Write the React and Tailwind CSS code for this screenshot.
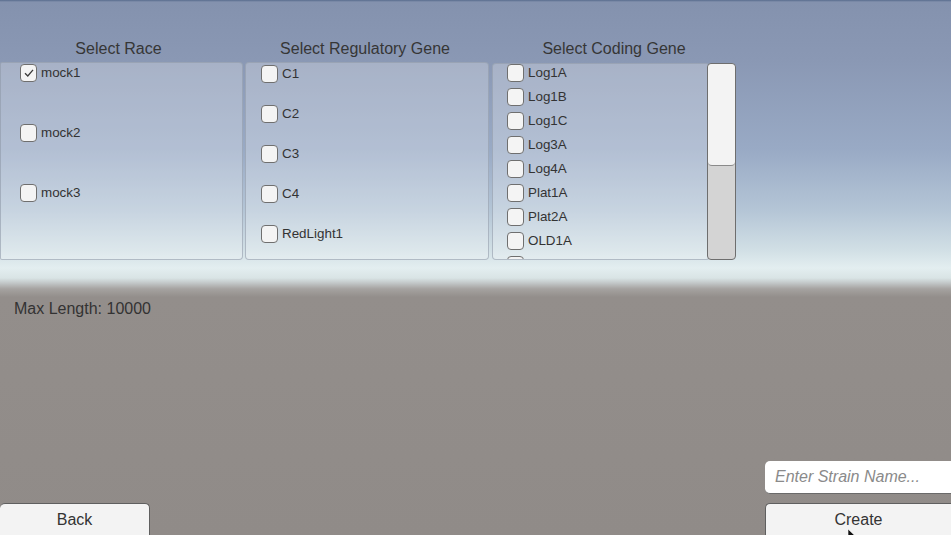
import React from 'react';

const race = ['mock1', 'mock2', 'mock3'];
const regulatory = ['C1', 'C2', 'C3', 'C4', 'RedLight1'];
const coding = ['Log1A', 'Log1B', 'Log1C', 'Log3A', 'Log4A', 'Plat1A', 'Plat2A', 'OLD1A', 'OLD2A'];

const Check = ({ label, checked }) => (
  <div className="flex h-[17px] shrink-0 items-center gap-[4px]">
    <div className="flex h-[18px] w-[17px] items-center justify-center rounded-[4px] border border-[#6f6f6f] bg-[#f4f4f4]">
      {checked && (
        <svg width="12" height="12" viewBox="0 0 12 12" fill="none">
          <path d="M2 6.2 L4.8 9 L10 2.8" stroke="#3a3a3a" strokeWidth="1.3" />
        </svg>
      )}
    </div>
    <span className="text-[13.4px] leading-none text-[#333]">{label}</span>
  </div>
);

const Column = ({ title, width, shift = 0, children }) => (
  <div className="flex flex-col" style={{ width }}>
    <div className="h-[22px] text-center text-[16px] leading-[22px] text-[#363636]" style={{ paddingRight: shift }}>
      {title}
    </div>
    {children}
  </div>
);

const panel = 'h-[198px] overflow-hidden rounded-[4px] border border-[#8f9aa8]/60 bg-white/25';

export default function App() {
  return (
    <div className="relative flex h-[535px] w-[951px] flex-col overflow-hidden bg-[linear-gradient(to_bottom,#586c8d_0px,#8492ae_2px,#8a98b4_60px,#99aac5_150px,#b4c5d6_210px,#d1dfe5_250px,#e3eef0_268px,#d9e4e5_278px,#c2c7c8_283px,#a5a2a0_289px,#938e8b_297px,#908b88_535px)] font-['Liberation_Sans',Arial,sans-serif] text-[#333]">
      <div className="flex pt-[38px]">
        <Column title="Select Race" width={243} shift={6}>
          <div className={`${panel} mt-[2px] rounded-l-[2px]`}>
            <div className="flex flex-col gap-[43px] pl-[19px] pt-[1px]">
              {race.map((r, i) => (
                <Check key={r} label={r} checked={i === 0} />
              ))}
            </div>
          </div>
        </Column>
        <div className="w-[2px]" />
        <Column title="Select Regulatory Gene" width={244} shift={4}>
          <div className={`${panel} mt-[2px]`}>
            <div className="flex flex-col gap-[23px] pl-[15px] pt-[2px]">
              {regulatory.map((r) => (
                <Check key={r} label={r} />
              ))}
            </div>
          </div>
        </Column>
        <div className="w-[3px]" />
        <Column title="Select Coding Gene" width={244} shift={-2}>
          <div className="relative mt-[3px] h-[197px]">
            <div className="h-full w-[218px] overflow-hidden rounded-[4px] border border-[#8f9aa8]/60 bg-white/25">
              <div className="flex flex-col gap-[7px] pl-[14px] pt-[0px]">
                {coding.map((r) => (
                  <Check key={r} label={r} />
                ))}
              </div>
            </div>
            <div className="absolute right-0 top-0 h-full w-[29px] overflow-hidden rounded-[4px] border border-[#6e6e6e] bg-[#d4d4d4]">
              <div className="h-[102px] rounded-[4px] border-b border-[#8a8a8a] bg-[#f3f3f3]" />
            </div>
          </div>
        </Column>
      </div>

      <div className="mt-[40px] pl-[14px] text-[16px] leading-[18px] text-[#333]">Max Length: 10000</div>

      <div className="mt-auto flex items-end justify-between">
        <button className="h-[32px] w-[150px] rounded-t-[5px] border-t border-r border-[#5f5f5f] bg-[#f3f3f3] text-[16px] leading-[32px] text-[#333]">
          Back
        </button>
        <div className="flex w-[186px] flex-col gap-[9px]">
          <div className="flex h-[33px] items-center rounded-l-[5px] border-b border-[#6a6a6a] bg-white pl-[10px] text-[16px] italic text-[#8a8a8a]">
            Enter Strain Name...
          </div>
          <button className="relative h-[32px] rounded-tl-[5px] border-t border-l border-[#5f5f5f] bg-[#f3f3f3] text-[16px] leading-[32px] text-[#333]">
            Create
            <svg className="absolute left-[81px] top-[25px]" width="10" height="12" viewBox="0 0 10 12">
              <path d="M1 0 L1 10 L3.5 7.8 L5.5 12 L7 11.3 L5.2 7.2 L8.5 7.2 Z" fill="#111" stroke="#fff" strokeWidth="0.6" />
            </svg>
          </button>
        </div>
      </div>
    </div>
  );
}
